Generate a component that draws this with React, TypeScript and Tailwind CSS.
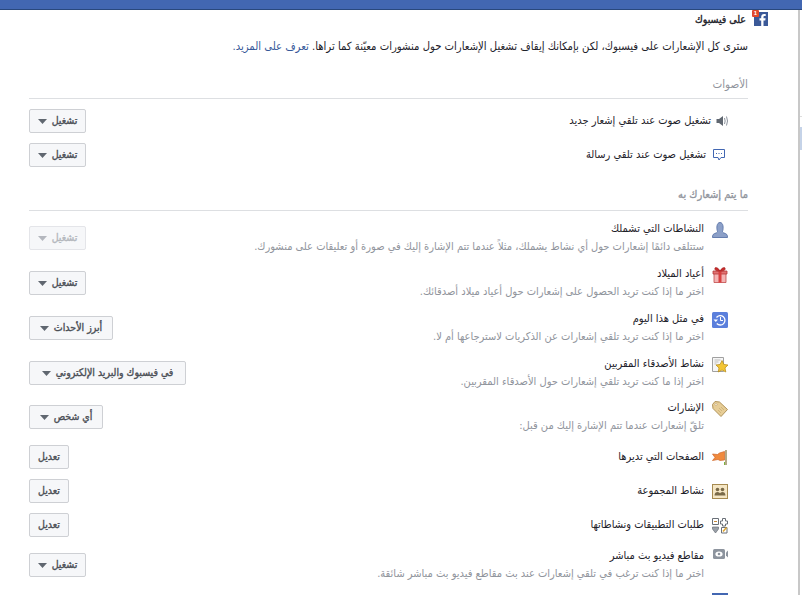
import React from "react";

const Caret = ({ light }: { light?: boolean }) => (
  <svg width="9" height="5" viewBox="0 0 9 5" className="shrink-0">
    <path d="M0 0h9L4.500 5z" fill={light ? "#b4b7be" : "#606770"} />
  </svg>
);

const Btn = ({ label, w, disabled, caret = true }: { label: string; w: string; disabled?: boolean; caret?: boolean }) => (
  <div
    className={`${w} h-6 shrink-0 whitespace-nowrap rounded-[2px] border flex items-center justify-center gap-[5px] text-[10.500px] [-webkit-text-stroke:0.35px] bg-[#f6f7f9] ${
      disabled ? "border-[#e4e5e9] text-[#b4b7bd]" : "border-[#ced0d4] text-[#4b4f56]"
    }`}
  >
    <span>{label}</span>
    {caret && <Caret light={disabled} />}
  </div>
);

const icons: Record<string, React.ReactNode> = {
  person: (
    <svg width="16" height="16" viewBox="0 0 16 16">
      <path d="M.5 15.500c0-3 .8-3.600 3.500-4.500 1.300-.5 1.800-1 1.300-2.300C4.500 6.500 4.500 .5 8 .5s3.500 6 2.700 8.200c-.5 1.300 0 1.800 1.300 2.300 2.700.9 3.500 1.500 3.500 4.500z" fill="#8ca0c8" stroke="#5a74a8" strokeWidth=".9" />
    </svg>
  ),
  gift: (
    <svg width="16" height="16" viewBox="0 0 16 16">
      <path d="M2 6h12v9.500H2z" fill="#f3b4b4" stroke="#c24a4a" strokeWidth=".8" />
      <path d="M1 4h14v3H1z" fill="#e27272" stroke="#b23838" strokeWidth=".8" />
      <path d="M6.500 4h3v11.500h-3z" fill="#d84040" />
      <path d="M8 4C6 0 2 -.5 3 2.500 3.500 4 6 4 8 4c2 0 4.500 0 5-1.500C14-.5 10 0 8 4z" fill="#c92c2c" stroke="#9c2020" strokeWidth=".6" />
    </svg>
  ),
  clock: (
    <svg width="16" height="16" viewBox="0 0 16 16">
      <rect width="16" height="16" rx="1.500" fill="#5b7fdc" />
      <path d="M4.500 5.500A4.700 4.700 0 1 1 4.800 11.500" stroke="#fff" strokeWidth="1.300" fill="none" />
      <path d="M1.500 7.500h4.500l-2.200 2.600z" fill="#fff" />
      <path d="M8.500 5v3.500h2.500" stroke="#fff" fill="none" />
    </svg>
  ),
  star: (
    <svg width="16" height="16" viewBox="0 0 16 16">
      <path d="M.5 .5h11v14H.5z" fill="#f6f6f6" stroke="#a0a0a0" />
      <path d="M2.500 3h6M2.500 5h4M2.500 7h2" stroke="#bdbdbd" />
      <path d="M10 3.500l1.900 3.900 4.100.6-3 2.900.8 4.100-3.800-2-3.800 2 .8-4.100-3-2.900 4.100-.6z" fill="#f3c534" stroke="#b48a16" strokeWidth=".7" />
    </svg>
  ),
  tag: (
    <svg width="16" height="16" viewBox="0 0 16 16">
      <path d="M.5 3.500L3 .5l4.500.5 8 7.500-6.500 7-8-8z" fill="#e7cd96" stroke="#b0935a" />
      <circle cx="4" cy="3.500" r="1" fill="#fff" stroke="#b0935a" strokeWidth=".5" />
      <path d="M7 7l3 3M6 9l3 3M9 6l3 3" stroke="#c5aa70" strokeWidth=".7" />
    </svg>
  ),
  flag: (
    <svg width="16" height="16" viewBox="0 0 16 16">
      <path d="M.5 4l5 .5 2-1.500 5-1.500v8.500l-4.500.5-2-1-5.500 1 2.500-3z" fill="#f08a3c" stroke="#d0662a" strokeWidth=".7" />
      <path d="M14 0v15" stroke="#8a7a48" strokeWidth="1.300" />
      <path d="M12.500 12v3" stroke="#7cb342" />
    </svg>
  ),
  group: (
    <svg width="16" height="15" viewBox="0 0 16 15">
      <rect x=".5" y=".5" width="15" height="14" fill="#f5e6c4" stroke="#a68a50" />
      <circle cx="5.500" cy="5.500" r="1.800" fill="#7a6a48" />
      <circle cx="10.500" cy="5.500" r="1.800" fill="#7a6a48" />
      <path d="M2.500 11.500c0-2.500 1.500-3.500 3-3.500s3 1 3 3.500zM7.500 11.500c0-2.500 1.500-3.500 3-3.500s3 1 3 3.500z" fill="#7a6a48" />
    </svg>
  ),
  apps: (
    <svg width="16" height="16" viewBox="0 0 16 16">
      <path d="M.5 .5h6v6h-6z" fill="#fff" stroke="#6a7078" />
      <path d="M2 3.500h3" stroke="#c98a3a" />
      <path d="M10.500 .5h3v2.500h2v3h-2v2h-3v-2h-2v-3h2z" fill="#fff" stroke="#6a7078" />
      <path d="M.5 9h6v2L3.500 15 .5 11z" fill="#9aa0a8" stroke="#6a7078" strokeWidth=".7" />
      <path d="M9.500 9.500h5.500v5.500h-5.500z" fill="#fff" stroke="#6a7078" />
      <path d="M11 13.500l3.500-4" stroke="#e0a52c" strokeWidth="1.500" />
    </svg>
  ),
  video: (
    <svg width="15" height="10" viewBox="0 0 15 10">
      <rect width="12" height="10" rx="1.500" fill="#8d949e" />
      <ellipse cx="6" cy="5" rx="3.600" ry="2.600" fill="#fff" />
      <circle cx="6" cy="5" r="1.300" fill="#8d949e" />
      <path d="M13 3.500L15 1.500v7l-2-2z" fill="#8d949e" />
    </svg>
  ),
};

type RowP = { icon: string; title: string; sub?: string; btn: React.ReactNode; mb: string };

const Row = ({ icon, title, sub, btn, mb }: RowP) => (
  <div className={`${mb} flex items-center justify-between`}>
    <div className="flex pr-[20px]">
      <div className="w-[16px] mt-[1px] flex items-start justify-center shrink-0">{icons[icon]}</div>
      <div className="mr-[8px]">
        <div className="text-[11px] leading-[16px] text-[#1d2129]">{title}</div>
        {sub && <div className="text-[11px] leading-[16px] mt-[2px] text-[#90949c]">{sub}</div>}
      </div>
    </div>
    {btn}
  </div>
);

export default function App() {
  return (
    <div dir="rtl" className="font-['DejaVu_Sans_Condensed','DejaVu_Sans',sans-serif] w-[802px] h-[595px] overflow-hidden bg-white relative">
      <div className="h-[10px] bg-[#4267b2] border-b border-[#29487d]" />
      <div className="absolute left-[798px] top-[10px] bottom-0 w-[4px] border-l-2 border-[#c8c8c8]">
        <div className="mt-[106px] h-px bg-[#dddddd]" />
        <div className="mt-[10px] h-[23px] bg-[#c5d3e8]" />
      </div>
      <div className="mr-[54px] ml-[29px]">
        <div className="flex items-center h-[14px] mt-[2px] mr-[-20px]">
          <div className="relative w-[14px] h-[14px] shrink-0">
            <svg width="14" height="14" viewBox="0 0 14 14">
              <rect width="14" height="14" fill="#3b5998" />
              <path d="M9.500 14V8.500h1.800l.3-2.200H9.500V5c0-.7.2-1.100 1.100-1.100h1.100V2c-.2 0-.9-.1-1.700-.1-1.700 0-2.800 1-2.800 2.900v1.500H5.500v2.200h1.700V14z" fill="#fff" />
            </svg>
            <span className="absolute left-[-2px] top-[-2px] w-[7px] h-[7px] rounded-[1px] bg-[#e0482c] text-white text-[6px] leading-[7px] font-bold text-center font-['Liberation_Sans']">1</span>
          </div>
          <span className="mr-[8px] text-[10.500px] [-webkit-text-stroke:0.35px] leading-[14px] text-[#1d2129]">على فيسبوك</span>
        </div>
        <p className="mt-[13px] text-[11.200px] leading-[16px] text-[#1d2129] whitespace-nowrap">
          سترى كل الإشعارات على فيسبوك، لكن بإمكانك إيقاف تشغيل الإشعارات حول منشورات معيّنة كما تراها. <span className="text-[#365899]">تعرف على المزيد.</span>
        </p>
        <div className="mt-[21px] mb-[10px] pb-[6px] border-b border-[#dddfe2] text-[11.500px] leading-[16px] text-[#90949c]">الأصوات</div>
        <div className="h-6 mb-[10px] flex items-center justify-between">
          <div className="flex items-center pr-[20px]">
            <svg width="12" height="12" viewBox="0 0 12 12" className="shrink-0">
              <path d="M.5 4h2.500l4-3v10L3 8H.5z" fill="#606770" />
              <path d="M8.500 3q1.300 3 0 6M10.500 1.500q2 4.500 0 9" stroke="#8d949e" fill="none" />
            </svg>
            <span className="mr-[5px] text-[11px] leading-[16px] text-[#1d2129]">تشغيل صوت عند تلقي إشعار جديد</span>
          </div>
          <Btn w="w-[57px]" label="تشغيل" />
        </div>
        <div className="h-6 flex items-center justify-between">
          <div className="flex items-center pr-[23px]">
            <svg width="12" height="12" viewBox="0 0 12 12" className="shrink-0">
              <path d="M.5 .5h11v8h-3.500l-2 2.500-1-2.500H.5z" fill="#fff" stroke="#4267b2" />
              <path d="M3 4.500h1M5.500 4.500h1M8 4.500h1" stroke="#4267b2" />
            </svg>
            <span className="mr-[7px] text-[11px] leading-[16px] text-[#1d2129]">تشغيل صوت عند تلقي رسالة</span>
          </div>
          <Btn w="w-[57px]" label="تشغيل" />
        </div>
        <div className="mt-[20px] mb-[10px] pb-[7px] border-b border-[#dddfe2] text-[11px] [-webkit-text-stroke:0.3px] leading-[16px] text-[#90949c]">ما يتم إشعارك به</div>
        <Row mb="mb-[11px]" icon="person" title="النشاطات التي تشملك" sub="ستتلقى دائمًا إشعارات حول أي نشاط يشملك، مثلاً عندما تتم الإشارة إليك في صورة أو تعليقات على منشورك." btn={<Btn w="w-[57px]" label="تشغيل" disabled />} />
        <Row mb="mb-[11px]" icon="gift" title="أعياد الميلاد" sub="اختر ما إذا كنت تريد الحصول على إشعارات حول أعياد ميلاد أصدقائك." btn={<Btn w="w-[57px]" label="تشغيل" />} />
        <Row mb="mb-[11px]" icon="clock" title="في مثل هذا اليوم" sub="اختر ما إذا كنت تريد تلقي إشعارات عن الذكريات لاسترجاعها أم لا." btn={<Btn w="w-[84px]" label="أبرز الأحداث" />} />
        <Row mb="mb-[10px]" icon="star" title="نشاط الأصدقاء المقربين" sub="اختر إذا ما كنت تريد تلقي إشعارات حول الأصدقاء المقربين." btn={<Btn w="w-[157px]" label="في فيسبوك والبريد الإلكتروني" />} />
        <Row mb="mb-[11px]" icon="tag" title="الإشارات" sub="تلقّ إشعارات عندما تتم الإشارة إليك من قبل:" btn={<Btn w="w-[74px]" label="أي شخص" />} />
        <Row mb="mb-[10px]" icon="flag" title="الصفحات التي تديرها" btn={<Btn w="w-[40px]" label="تعديل" caret={false} />} />
        <Row mb="mb-[10px]" icon="group" title="نشاط المجموعة" btn={<Btn w="w-[40px]" label="تعديل" caret={false} />} />
        <Row mb="mb-[11px]" icon="apps" title="طلبات التطبيقات ونشاطاتها" btn={<Btn w="w-[40px]" label="تعديل" caret={false} />} />
        <Row mb="mb-[11px]" icon="video" title="مقاطع فيديو بث مباشر" sub="اختر ما إذا كنت ترغب في تلقي إشعارات عند بث مقاطع فيديو بث مباشر شائقة." btn={<Btn w="w-[57px]" label="تشغيل" />} />
        <div className="mr-[20px] w-[16px] h-[8px] bg-[#4267b2]" />
      </div>
    </div>
  );
}
